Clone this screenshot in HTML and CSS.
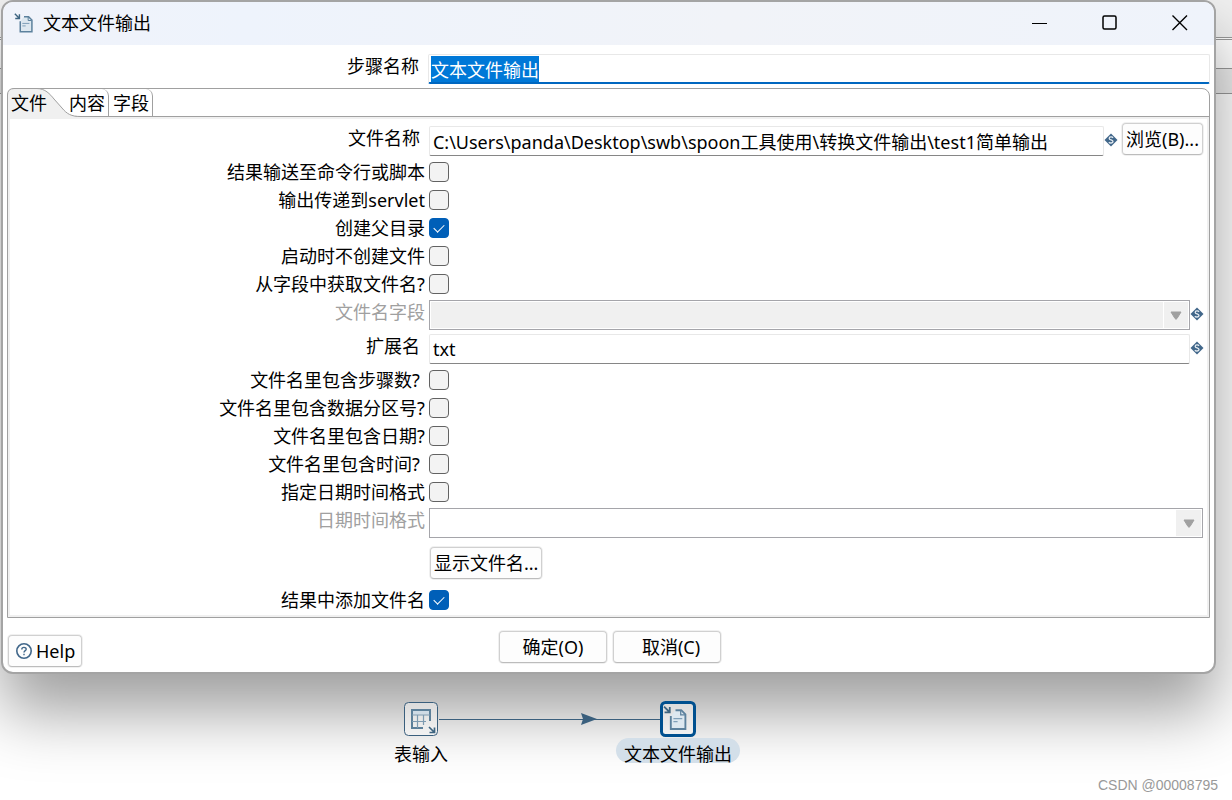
FILE: index.html
```html
<!DOCTYPE html>
<html lang="zh-CN">
<head>
<meta charset="utf-8">
<title>文本文件输出</title>
<link rel="stylesheet" href="styles.css">
</head>
<body>
<svg class="defs" width="0" height="0" aria-hidden="true">
  <symbol id="var" viewBox="0 0 14 14">
    <path d="M7 0.5 L13.5 7 L7 13.5 L0.5 7 Z" fill="#41678a"/>
    <path d="M9 4.8 C8.3 3.6 5.2 3.6 5.2 5.4 C5.2 7.3 9 6.6 9 8.6 C9 10.4 5.6 10.4 4.9 9.1" fill="none" stroke="#e4ebf1" stroke-width="1.3"/>
  </symbol>
  <symbol id="fileout" viewBox="0 0 24 24">
    <path d="M1 1 L6 6 M6.500 1.500 V6.500 H1.500" fill="none" stroke="#3d6480" stroke-width="1.700"/>
    <path d="M7.500 10 V22.500 H21.500 V8.500 L17.500 4.500 H12" fill="#dde8f0" stroke="#5c819d" stroke-width="1.800"/>
    <path d="M17 4.500 V9 H21" fill="none" stroke="#5c819d" stroke-width="1.200"/>
    <path d="M10 12.500 H18.500 M10 15.500 H14" stroke="#7f9fb8" stroke-width="1.200"/>
  </symbol>
</svg>

<div class="backdrop" aria-hidden="true"><div class="bar bar-top"></div><div class="bar bar-mid"></div><div class="bar bar-low"></div></div>

<form class="dialog">
  <header class="titlebar">
    <svg class="title-icon" width="20" height="20"><use href="#fileout" width="20" height="20"/></svg>
    <h1 class="title">文本文件输出</h1>
    <button type="button" class="winbtn" aria-label="最小化"><svg width="16" height="16"><path d="M0 8.500 H15" stroke="#000" fill="none"/></svg></button>
    <button type="button" class="winbtn" aria-label="最大化"><svg width="16" height="16"><rect x="1" y="1" width="13" height="13" rx="1.500" fill="none" stroke="#000" stroke-width="1.500"/></svg></button>
    <button type="button" class="winbtn" aria-label="关闭"><svg width="16" height="16"><path d="M0.500 0.500 L15 15 M15 0.500 L0.500 15" stroke="#000" stroke-width="1.400" fill="none"/></svg></button>
  </header>

  <div class="row name-row">
    <label class="label inset" for="step">步骤名称</label>
    <input class="text name" id="step" type="text" value="文本文件输出" autofocus>
  </div>

  <section class="panel">
    <div class="tabs" role="tablist">
      <svg class="tab-shape" width="74" height="30" aria-hidden="true">
        <path d="M0.500 30 V7 Q0.500 0.500 7 0.500 H30 C38 0.500 43 6 47 11 L55 20 C60 26 64 28.500 72 28.500 V30 Z" fill="#f0f0f0"/>
        <path d="M0.500 30 V7 Q0.500 0.500 7 0.500 H30 C38 0.500 43 6 47 11 L55 20 C60 26 64 28.500 74 28.500" fill="none" stroke="#a0a0a0"/>
      </svg>
      <button type="button" class="tab active" role="tab" aria-selected="true">文件</button>
      <button type="button" class="tab" role="tab">内容</button>
      <button type="button" class="tab last" role="tab">字段</button>
    </div>
    <div class="fields">
      <div class="row file-row">
        <label class="label inset" for="fname">文件名称</label>
        <div class="control">
          <input class="text grow" id="fname" type="text" value="C:\Users\panda\Desktop\swb\spoon工具使用\转换文件输出\test1简单输出">
          <svg class="var" width="14" height="14"><use href="#var"/></svg>
          <button type="button" class="btn browse">浏览(B)...</button>
        </div>
      </div>
      <div class="row check-row"><label class="label" for="c1">结果输送至命令行或脚本</label><input class="check" type="checkbox" id="c1"></div>
      <div class="row check-row"><label class="label" for="c2">输出传递到servlet</label><input class="check" type="checkbox" id="c2"></div>
      <div class="row check-row"><label class="label" for="c3">创建父目录</label><input class="check" type="checkbox" id="c3" checked></div>
      <div class="row check-row"><label class="label" for="c4">启动时不创建文件</label><input class="check" type="checkbox" id="c4"></div>
      <div class="row check-row"><label class="label" for="c5">从字段中获取文件名?</label><input class="check" type="checkbox" id="c5"></div>
      <div class="row field-row">
        <label class="label off" for="ffield">文件名字段</label>
        <div class="control">
          <div class="combo off-combo"><select id="ffield" disabled><option></option></select><span class="arrow"><svg width="12" height="9"><path d="M1 1 H11 L7 7.500 Q6 9 5 7.500 Z" fill="#a0a0a0" stroke="#a0a0a0" stroke-linejoin="round"/></svg></span></div>
          <svg class="var" width="14" height="14"><use href="#var"/></svg>
        </div>
      </div>
      <div class="row field-row">
        <label class="label inset" for="ext">扩展名</label>
        <div class="control">
          <input class="text grow" id="ext" type="text" value="txt">
          <svg class="var" width="14" height="14"><use href="#var"/></svg>
        </div>
      </div>
      <div class="row check-row"><label class="label inset" for="c6">文件名里包含步骤数?</label><input class="check" type="checkbox" id="c6"></div>
      <div class="row check-row"><label class="label" for="c7">文件名里包含数据分区号?</label><input class="check" type="checkbox" id="c7"></div>
      <div class="row check-row"><label class="label" for="c8">文件名里包含日期?</label><input class="check" type="checkbox" id="c8"></div>
      <div class="row check-row"><label class="label inset" for="c9">文件名里包含时间?</label><input class="check" type="checkbox" id="c9"></div>
      <div class="row check-row"><label class="label" for="c10">指定日期时间格式</label><input class="check" type="checkbox" id="c10"></div>
      <div class="row field-row">
        <label class="label off" for="dfmt">日期时间格式</label>
        <div class="control wide">
          <div class="combo"><select id="dfmt" disabled><option></option></select><span class="arrow"><svg width="12" height="9"><path d="M1 1 H11 L7 7.500 Q6 9 5 7.500 Z" fill="#a0a0a0" stroke="#a0a0a0" stroke-linejoin="round"/></svg></span></div>
        </div>
      </div>
      <div class="row show-row"><button type="button" class="btn show">显示文件名...</button></div>
      <div class="row check-row"><label class="label" for="c11">结果中添加文件名</label><input class="check" type="checkbox" id="c11" checked></div>
    </div>
  </section>

  <footer class="footer">
    <button type="button" class="btn help"><svg width="18" height="18"><circle cx="9" cy="9" r="7.200" fill="none" stroke="#41678a" stroke-width="1.600"/><path d="M6.800 7.400 C6.800 4.800 11.200 4.800 11.200 7.200 C11.200 8.700 9 8.700 9 10.500 M9 11.700 V13.200" fill="none" stroke="#41678a" stroke-width="1.400"/></svg>Help</button>
    <div class="actions">
      <button type="button" class="btn action">确定(O)</button>
      <button type="button" class="btn action cancel">取消(C)</button>
    </div>
  </footer>
</form>

<main class="canvas">
  <svg class="hop" width="222" height="16"><path d="M0 8.500 H222" stroke="#3a5f7d"/><path d="M142 2 L158 8 L142 14 L144 8 Z" fill="#3a5f7d"/></svg>
  <div class="node node-in">
    <svg width="34" height="34"><rect x="0.500" y="0.500" width="33" height="33" rx="4" fill="#fff" fill-opacity="0.400" stroke="#3a5f7d"/>
      <path d="M8 8 H26 V12.500 H8 Z" fill="#cfdbe5"/>
      <path d="M19 26 H8 V8 H26 V19" fill="none" stroke="#5c7f99" stroke-width="2"/>
      <path d="M8 13 H26 M8 19.500 H22 M13.500 13 V26 M19.500 13 V23" fill="none" stroke="#7d9ab0" stroke-width="1.200"/>
      <path d="M25 25 L30 30 M30.500 25.500 V30.500 H25.500" fill="none" stroke="#3d6480" stroke-width="1.700"/></svg>
    <span class="node-name">表输入</span>
  </div>
  <div class="node node-out">
    <svg width="36" height="36"><rect x="1.500" y="1.500" width="33" height="33" rx="4" fill="#fff" fill-opacity="0.400" stroke="#00508f" stroke-width="3"/><use href="#fileout" x="3" y="4" width="25" height="26"/></svg>
    <span class="node-name selected">文本文件输出</span>
  </div>
  <p class="mark">CSDN @00008795</p>
</main>
<script src="main.js"></script>
</body>
</html>
```
FILE: styles.css
```css
* { box-sizing: border-box; }
body {
  margin: 0;
  min-height: 100vh;
  display: flex;
  flex-direction: column;
  padding: 0 16px 0 1px;
  background: #fff;
  color: #000;
  font: 18px/24px "Noto Sans", "Noto Sans CJK SC", sans-serif;
  overflow: hidden;
}
button, input, select { font: inherit; color: inherit; margin: 0; }
svg { display: block; flex: none; }
.defs { position: absolute; }

.backdrop { position: absolute; inset: 0; }
.bar { border-bottom: 1px solid #999; }
.bar-top { height: 38px; background: #f0f0f0; }
.bar-mid { height: 30px; margin-top: 1px; border-top: 1px solid #999; }
.bar-low { height: 25px; background: #ececec; }

.dialog {
  position: relative;
  background: #fff;
  border: 2px solid #a4a4a4;
  border-radius: 12px;
  background-clip: padding-box;
  box-shadow: 0 38px 64px rgba(0, 0, 0, .38);
}
.titlebar {
  display: flex;
  align-items: center;
  height: 43px;
  padding: 0 0 1px 11px;
  background: linear-gradient(90deg, #f0f3fa, #eef3fc 20%, #f1f3f8 60%, #eff3fb);
  border-radius: 10px 10px 0 0;
}
.title { flex: 1; margin: 0 0 0 9px; font-size: 18px; font-weight: 400; }
.winbtn {
  width: 70px;
  height: 40px;
  padding: 0 0 0 2px;
  display: flex;
  align-items: center;
  justify-content: center;
  border: 0;
  background: none;
}

.row { display: grid; grid-template-columns: 35% 1fr; }
.label { text-align: right; padding-right: 4px; white-space: nowrap; }
.label.inset { padding-right: 9px; }
.label.off { color: #a0a0a0; }
.name-row { margin: 9px 4px 0; }
.text {
  height: 30px;
  min-width: 0;
  padding: 0 3px 1px;
  border: 1px solid #e8e8e8;
  border-bottom-color: #868686;
  border-radius: 2px;
  background: #fff;
  outline: none;
}
.text.name { padding: 0 2px; border-bottom: 2px solid #0067c0; }
.text::selection { background: #0078d7; color: #fff; }
.grow { flex: 1; }

.panel { margin: 4px 4px 0; border: 1px solid #a0a0a0; border-radius: 8px 8px 0 0; }
.tabs { position: relative; display: flex; height: 28px; border-bottom: 1px solid #a0a0a0; }
.tab-shape { position: absolute; left: -1px; top: -1px; }
.tab {
  position: relative;
  padding: 0 3px;
  border: 0;
  border-right: 1px solid #a0a0a0;
  border-radius: 0 7px 0 0;
  background: none;
  white-space: nowrap;
}
.tab.active { padding-right: 19px; border: 0; }
.tab.last { padding-left: 4px; }

.fields { border: 2px solid #f0f0f0; padding-bottom: 1px; }
.file-row { padding: 7px 0 2px; }
.check-row { height: 28px; align-items: center; }
.field-row { padding: 2px 0; }
.control { display: flex; align-items: center; padding-right: 3px; }
.control.wide { padding-right: 4px; }
.var { width: 14px; margin-bottom: 2px; }
.combo {
  flex: 1;
  display: flex;
  position: relative;
  height: 30px;
  border: 1px solid #a5a5aa;
  background: #fff;
}
.combo select { flex: 1; appearance: none; border: 0; background: none; padding: 0 30px 0 4px; }
.arrow {
  position: absolute;
  top: 1px;
  right: 1px;
  bottom: 1px;
  width: 25px;
  display: flex;
  align-items: center;
  justify-content: center;
  background: #f0f0f0;
  pointer-events: none;
}
.off-combo { background: #f0f0f0; box-shadow: inset 0 0 0 1px #fff; }
.off-combo .arrow { border-left: 1px solid #fff; }

.check {
  appearance: none;
  width: 20px;
  height: 20px;
  border: 1px solid #626262;
  border-radius: 4px;
  background: #f3f3f3;
}
.check:checked {
  border-color: #005fb8;
  background: #005fb8;
  display: grid;
  place-items: center;
}
.check:checked::before {
  content: "";
  width: 9px;
  height: 5px;
  margin-bottom: 3px;
  border: solid #fff;
  border-width: 0 0 1px 1px;
  transform: rotate(-45deg);
}

.btn {
  height: 32px;
  padding: 0 4px;
  border: 1px solid #d0d0d0;
  border-bottom-color: #bcbcbc;
  border-radius: 4px;
  background: #fdfdfd;
  box-shadow: 0 0 0 1px #f0f0f0;
  white-space: nowrap;
}
.browse { width: 81px; padding: 0 3px; margin: -4px 1px 0 4px; }
.show-row { padding: 7px 0; }
.show { grid-column: 2; justify-self: start; margin-left: 1px; padding: 0 3px; }

.footer {
  display: grid;
  grid-template-columns: 1fr auto 1fr;
  align-items: start;
  padding: 13px 2px 5px 5px;
}
.help { display: flex; align-items: center; gap: 3px; justify-self: start; padding: 0 6px; margin-top: 4px; }
.actions { display: flex; gap: 6px; }
.action { width: 108px; }
.cancel { padding-left: 12px; }

.canvas { position: relative; flex: 1; min-height: 126px; }
.hop { position: absolute; left: 438px; top: 37px; }
.node { position: absolute; display: flex; flex-direction: column; align-items: center; }
.node-in { left: 393px; top: 28px; }
.node-out { left: 615px; top: 27px; }
.node-name { padding-top: 6px; white-space: nowrap; }
.node-name.selected { margin-top: 1px; padding: 4px 8px 0; height: 25px; border-radius: 13px; background: #d3dfe9; }
.mark {
  position: absolute;
  right: -2px;
  bottom: 6px;
  margin: 0;
  font: 14px/18px "Liberation Sans", Arial, sans-serif;
  color: #999;
}
```
FILE: main.js
```js
const step = document.getElementById("step");
step.focus();
step.select();
```
